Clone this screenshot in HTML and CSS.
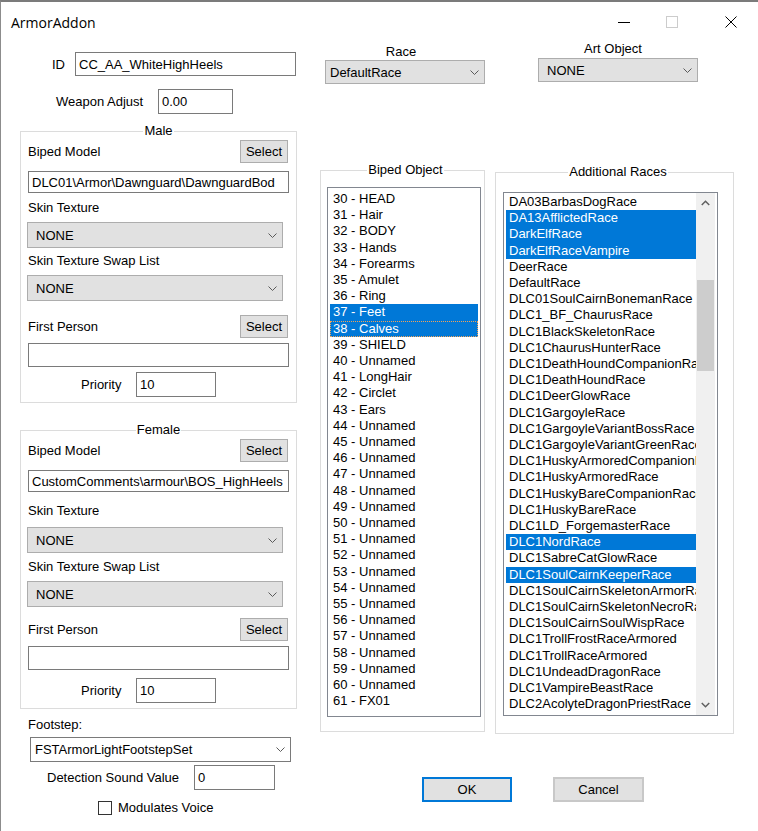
FILE: index.html
```html
<!DOCTYPE html>
<html>
<head>
<meta charset="UTF-8">
<title>ArmorAddon</title>
<link rel="stylesheet" href="styles.css">
</head>
<body>
<div class="window">
  <div class="titlebar">
    <span class="title">ArmorAddon</span>
    <div class="caption-btns">
      <span class="cap-min"></span>
      <svg class="cap-max" width="12" height="12"><rect x="0.5" y="0.5" width="11" height="11" fill="none" stroke="#cccccc"/></svg>
      <svg class="cap-close" width="12" height="12"><path d="M0.5 0.5L11.5 11.5M11.5 0.5L0.5 11.5" stroke="#000"/></svg>
    </div>
  </div>

  <div class="body">
    <div class="left">
      <div class="row id-row">
        <span class="lbl">ID</span>
        <div class="edit">CC_AA_WhiteHighHeels</div>
      </div>
      <div class="row weapon-row">
        <span class="lbl">Weapon Adjust</span>
        <div class="edit">0.00</div>
      </div>

      <fieldset class="group model">
        <legend>Male</legend>
        <div class="head">
          <span>Biped Model</span>
          <div class="btn select">Select</div>
        </div>
        <div class="edit path">DLC01\Armor\Dawnguard\DawnguardBod</div>
        <div class="caption skin-lbl">Skin Texture</div>
        <div class="combo skin-box"><span>NONE</span><svg width="9" height="5"><polyline points="0.5,0.5 4.5,4.5 8.5,0.5" fill="none" stroke="#5a5a5a"/></svg></div>
        <div class="caption swap-lbl">Skin Texture Swap List</div>
        <div class="combo swap-box"><span>NONE</span><svg width="9" height="5"><polyline points="0.5,0.5 4.5,4.5 8.5,0.5" fill="none" stroke="#5a5a5a"/></svg></div>
        <div class="head fp-row">
          <span>First Person</span>
          <div class="btn select">Select</div>
        </div>
        <div class="edit fp-path"></div>
        <div class="row prio-row">
          <span class="lbl">Priority</span>
          <div class="edit">10</div>
        </div>
      </fieldset>

      <fieldset class="group model female">
        <legend>Female</legend>
        <div class="head">
          <span>Biped Model</span>
          <div class="btn select">Select</div>
        </div>
        <div class="edit path">CustomComments\armour\BOS_HighHeels</div>
        <div class="caption skin-lbl">Skin Texture</div>
        <div class="combo skin-box"><span>NONE</span><svg width="9" height="5"><polyline points="0.5,0.5 4.5,4.5 8.5,0.5" fill="none" stroke="#5a5a5a"/></svg></div>
        <div class="caption swap-lbl">Skin Texture Swap List</div>
        <div class="combo swap-box"><span>NONE</span><svg width="9" height="5"><polyline points="0.5,0.5 4.5,4.5 8.5,0.5" fill="none" stroke="#5a5a5a"/></svg></div>
        <div class="head fp-row">
          <span>First Person</span>
          <div class="btn select">Select</div>
        </div>
        <div class="edit fp-path"></div>
        <div class="row prio-row">
          <span class="lbl">Priority</span>
          <div class="edit">10</div>
        </div>
      </fieldset>

      <div class="caption foot-lbl">Footstep:</div>
      <div class="combo plain foot-box"><span>FSTArmorLightFootstepSet</span><svg width="9" height="5"><polyline points="0.5,0.5 4.5,4.5 8.5,0.5" fill="none" stroke="#5a5a5a"/></svg></div>
      <div class="row detect-row">
        <span class="lbl">Detection Sound Value</span>
        <div class="edit">0</div>
      </div>
      <div class="row check-row">
        <span class="checkbox"></span>
        <span>Modulates Voice</span>
      </div>
    </div>

    <div class="right">
      <div class="top-row">
        <div class="race-blk">
          <div class="caption">Race</div>
          <div class="combo edit-like"><span>DefaultRace</span><svg width="9" height="5"><polyline points="0.5,0.5 4.5,4.5 8.5,0.5" fill="none" stroke="#5a5a5a"/></svg></div>
        </div>
        <div class="art-blk">
          <div class="caption">Art Object</div>
          <div class="combo"><span>NONE</span><svg width="9" height="5"><polyline points="0.5,0.5 4.5,4.5 8.5,0.5" fill="none" stroke="#5a5a5a"/></svg></div>
        </div>
      </div>

      <div class="groups">
        <fieldset class="group biped">
          <legend>Biped Object</legend>
          <div class="list">
            <div class="items">
              <div class="item">30 - HEAD</div>
              <div class="item">31 - Hair</div>
              <div class="item">32 - BODY</div>
              <div class="item">33 - Hands</div>
              <div class="item">34 - Forearms</div>
              <div class="item">35 - Amulet</div>
              <div class="item">36 - Ring</div>
              <div class="item sel">37 - Feet</div>
              <div class="item sel focus">38 - Calves</div>
              <div class="item">39 - SHIELD</div>
              <div class="item">40 - Unnamed</div>
              <div class="item">41 - LongHair</div>
              <div class="item">42 - Circlet</div>
              <div class="item">43 - Ears</div>
              <div class="item">44 - Unnamed</div>
              <div class="item">45 - Unnamed</div>
              <div class="item">46 - Unnamed</div>
              <div class="item">47 - Unnamed</div>
              <div class="item">48 - Unnamed</div>
              <div class="item">49 - Unnamed</div>
              <div class="item">50 - Unnamed</div>
              <div class="item">51 - Unnamed</div>
              <div class="item">52 - Unnamed</div>
              <div class="item">53 - Unnamed</div>
              <div class="item">54 - Unnamed</div>
              <div class="item">55 - Unnamed</div>
              <div class="item">56 - Unnamed</div>
              <div class="item">57 - Unnamed</div>
              <div class="item">58 - Unnamed</div>
              <div class="item">59 - Unnamed</div>
              <div class="item">60 - Unnamed</div>
              <div class="item">61 - FX01</div>
            </div>
          </div>
        </fieldset>

        <fieldset class="group races">
          <legend>Additional Races</legend>
          <div class="list">
            <div class="items">
              <div class="item">DA03BarbasDogRace</div>
              <div class="item sel">DA13AfflictedRace</div>
              <div class="item sel">DarkElfRace</div>
              <div class="item sel">DarkElfRaceVampire</div>
              <div class="item">DeerRace</div>
              <div class="item">DefaultRace</div>
              <div class="item">DLC01SoulCairnBonemanRace</div>
              <div class="item">DLC1_BF_ChaurusRace</div>
              <div class="item">DLC1BlackSkeletonRace</div>
              <div class="item">DLC1ChaurusHunterRace</div>
              <div class="item">DLC1DeathHoundCompanionRace</div>
              <div class="item">DLC1DeathHoundRace</div>
              <div class="item">DLC1DeerGlowRace</div>
              <div class="item">DLC1GargoyleRace</div>
              <div class="item">DLC1GargoyleVariantBossRace</div>
              <div class="item">DLC1GargoyleVariantGreenRace</div>
              <div class="item">DLC1HuskyArmoredCompanionRace</div>
              <div class="item">DLC1HuskyArmoredRace</div>
              <div class="item">DLC1HuskyBareCompanionRace</div>
              <div class="item">DLC1HuskyBareRace</div>
              <div class="item">DLC1LD_ForgemasterRace</div>
              <div class="item sel">DLC1NordRace</div>
              <div class="item">DLC1SabreCatGlowRace</div>
              <div class="item sel">DLC1SoulCairnKeeperRace</div>
              <div class="item">DLC1SoulCairnSkeletonArmorRace</div>
              <div class="item">DLC1SoulCairnSkeletonNecroRace</div>
              <div class="item">DLC1SoulCairnSoulWispRace</div>
              <div class="item">DLC1TrollFrostRaceArmored</div>
              <div class="item">DLC1TrollRaceArmored</div>
              <div class="item">DLC1UndeadDragonRace</div>
              <div class="item">DLC1VampireBeastRace</div>
              <div class="item">DLC2AcolyteDragonPriestRace</div>
            </div>
            <div class="scrollbar">
              <div class="arrow"><svg width="9" height="6"><polyline points="0.75,5 4.5,1.25 8.25,5" fill="none" stroke="#606060" stroke-width="1.5"/></svg></div>
              <div class="track"><div class="thumb"></div></div>
              <div class="arrow"><svg width="9" height="6"><polyline points="0.75,1 4.5,4.75 8.25,1" fill="none" stroke="#606060" stroke-width="1.5"/></svg></div>
            </div>
          </div>
        </fieldset>
      </div>

      <div class="btn-row">
        <div class="btn ok">OK</div>
        <div class="btn cancel">Cancel</div>
      </div>
    </div>
  </div>
</div>
</body>
</html>
```

FILE: styles.css
```css
body {
    margin: 0;
    font-family: "Liberation Sans", Arial, sans-serif;
    font-size: 13px;
    color: #000;
    background: #fff;
}
.window {
    width: 758px;
    height: 831px;
    box-sizing: border-box;
    border-top: 2px solid #7b7b7b;
    border-left: 1px solid #8c8c8c;
    background: #fff;
    overflow: hidden;
}

/* title bar */
.titlebar {
    height: 40px;
    display: flex;
    align-items: center;
}
.title {
    font-family: "Open Sans", "Noto Sans", sans-serif;
    font-size: 14px;
    margin-left: 10px;
}
.caption-btns {
    margin-left: auto;
    display: flex;
    align-items: center;
}
.cap-min {
    width: 12px;
    height: 1px;
    background: #000;
}
.cap-max {
    margin-left: 36px;
}
.cap-close {
    margin-left: 47px;
    margin-right: 21px;
}

/* common controls */
.row {
    display: flex;
    align-items: center;
}
.lbl {
    flex: none;
}
.caption {
    line-height: 14px;
}
.edit {
    box-sizing: border-box;
    border: 1px solid #7a7a7a;
    background: #fff;
    padding-left: 3px;
    display: flex;
    align-items: center;
    white-space: nowrap;
    overflow: hidden;
}
.combo {
    box-sizing: border-box;
    border: 1px solid #adadad;
    background: #e1e1e1;
    display: flex;
    align-items: center;
    justify-content: space-between;
    padding: 0 5px 0 8px;
    white-space: nowrap;
}
.combo.edit-like {
    padding-left: 4px;
}
.combo.plain {
    background: #fff;
    border-color: #7a7a7a;
    padding-left: 4px;
}
.combo svg {
    flex: none;
}
.btn {
    box-sizing: border-box;
    border: 1px solid #adadad;
    background: #e1e1e1;
    display: flex;
    align-items: center;
    justify-content: center;
}

.body {
    display: flex;
}

/* left column */
.left {
    width: 277px;
    margin-left: 19px;
    flex: none;
}
.id-row {
    margin-top: 10px;
    padding-left: 32px;
}
.id-row .lbl {
    width: 23px;
}
.id-row .edit {
    width: 221px;
    height: 24px;
}
.weapon-row {
    margin-top: 13px;
    padding-left: 36px;
}
.weapon-row .lbl {
    width: 102px;
}
.weapon-row .edit {
    width: 75px;
    height: 25px;
}

.group {
    margin: 0;
    min-width: 0;
    box-sizing: border-box;
    border: 1px solid #dcdcdc;
}
.group legend {
    margin: 0 auto;
    padding: 0 1px;
    line-height: 14px;
}

.model {
    width: 277px;
    margin-top: 10px;
    padding: 0 7px 5px 7px;
}
.model.female {
    margin-top: 20px;
}
.head {
    display: flex;
    justify-content: space-between;
    align-items: center;
    margin-top: 2px;
}
.select {
    width: 48px;
    height: 23px;
    margin-right: 1px;
}
.path {
    margin-top: 8px;
    height: 22px;
}
.skin-lbl {
    margin-top: 8px;
}
.model .combo {
    margin-left: -1px;
    width: 256px;
    height: 26px;
}
.skin-box {
    margin-top: 7px;
}
.swap-lbl {
    margin-top: 6px;
}
.model .swap-box {
    margin-top: 7px;
    height: 26px;
}
.fp-row {
    margin-top: 14px;
}
.fp-path {
    margin-top: 5px;
    height: 24px;
}
.prio-row {
    margin-top: 5px;
    padding-left: 53px;
}
.prio-row .lbl {
    width: 55px;
}
.prio-row .edit {
    width: 80px;
    height: 25px;
}

.female .skin-lbl {
    margin-top: 12px;
}
.female .skin-box {
    margin-top: 9px;
}
.female .swap-lbl {
    margin-top: 7px;
}
.female .fp-row {
    margin-top: 11px;
}
.female .prio-row {
    margin-top: 8px;
}

.foot-lbl {
    margin-top: 9px;
    margin-left: 8px;
}
.foot-box {
    margin-top: 5px;
    margin-left: 10px;
    width: 261px;
    height: 25px;
}
.detect-row {
    margin-top: 3px;
    padding-left: 27px;
}
.detect-row .lbl {
    width: 147px;
}
.detect-row .edit {
    width: 81px;
    height: 25px;
}
.check-row {
    margin-top: 10px;
    padding-left: 78px;
}
.checkbox {
    box-sizing: border-box;
    width: 14px;
    height: 14px;
    border: 1px solid #333;
    background: #fff;
    margin-right: 6px;
}

/* right side */
.right {
    width: 414px;
    margin-left: 23px;
    flex: none;
}
.top-row {
    display: flex;
    align-items: flex-start;
}
.race-blk {
    width: 160px;
    margin-left: 5px;
    margin-top: 3px;
}
.race-blk .caption {
    text-align: center;
    padding-right: 8px;
}
.race-blk .combo {
    margin-top: 1px;
    height: 24px;
}
.art-blk {
    width: 160px;
    margin-left: 53px;
}
.art-blk .caption {
    text-align: center;
    padding-right: 10px;
}
.art-blk .combo {
    margin-top: 2px;
    height: 24px;
}

.groups {
    display: flex;
    align-items: flex-start;
    margin-top: 79px;
}
.biped {
    width: 165px;
    padding: 0 0 14px 6px;
}
.races {
    width: 239px;
    margin-left: 10px;
    margin-top: 2px;
    padding: 0 0 17px 7px;
}

.list {
    box-sizing: border-box;
    border: 1px solid #828790;
    background: #fff;
    overflow: hidden;
}
.biped .list {
    margin-top: 10px;
    width: 154px;
    height: 530px;
}
.biped .items {
    padding: 3px 2px 0 2px;
}
.races .list {
    margin-top: 13px;
    width: 215px;
    height: 524px;
    display: flex;
}
.races .items {
    flex: 1;
    min-width: 0;
    padding: 1px 0 0 2px;
    overflow: hidden;
}
.item {
    line-height: 16.2px;
    padding-left: 3px;
    white-space: nowrap;
}
.item.sel {
    background: #0078d7;
    color: #fff;
}
.item.focus {
    outline: 1px dotted #f2a356;
    outline-offset: -1px;
}

.scrollbar {
    width: 19px;
    margin-right: 2px;
    background: #f0f0f0;
    display: flex;
    flex-direction: column;
}
.arrow {
    height: 20px;
    display: flex;
    align-items: center;
    justify-content: center;
}
.track {
    flex: 1;
}
.thumb {
    margin: 67px 1px 0 1px;
    height: 91px;
    background: #cdcdcd;
}

.btn-row {
    display: flex;
    margin-top: 43px;
    padding-left: 102px;
}
.ok {
    width: 90px;
    height: 25px;
    border: 2px solid #0078d7;
}
.cancel {
    width: 91px;
    height: 25px;
    margin-left: 41px;
    border: 2px solid #c8c8c8;
}
```
